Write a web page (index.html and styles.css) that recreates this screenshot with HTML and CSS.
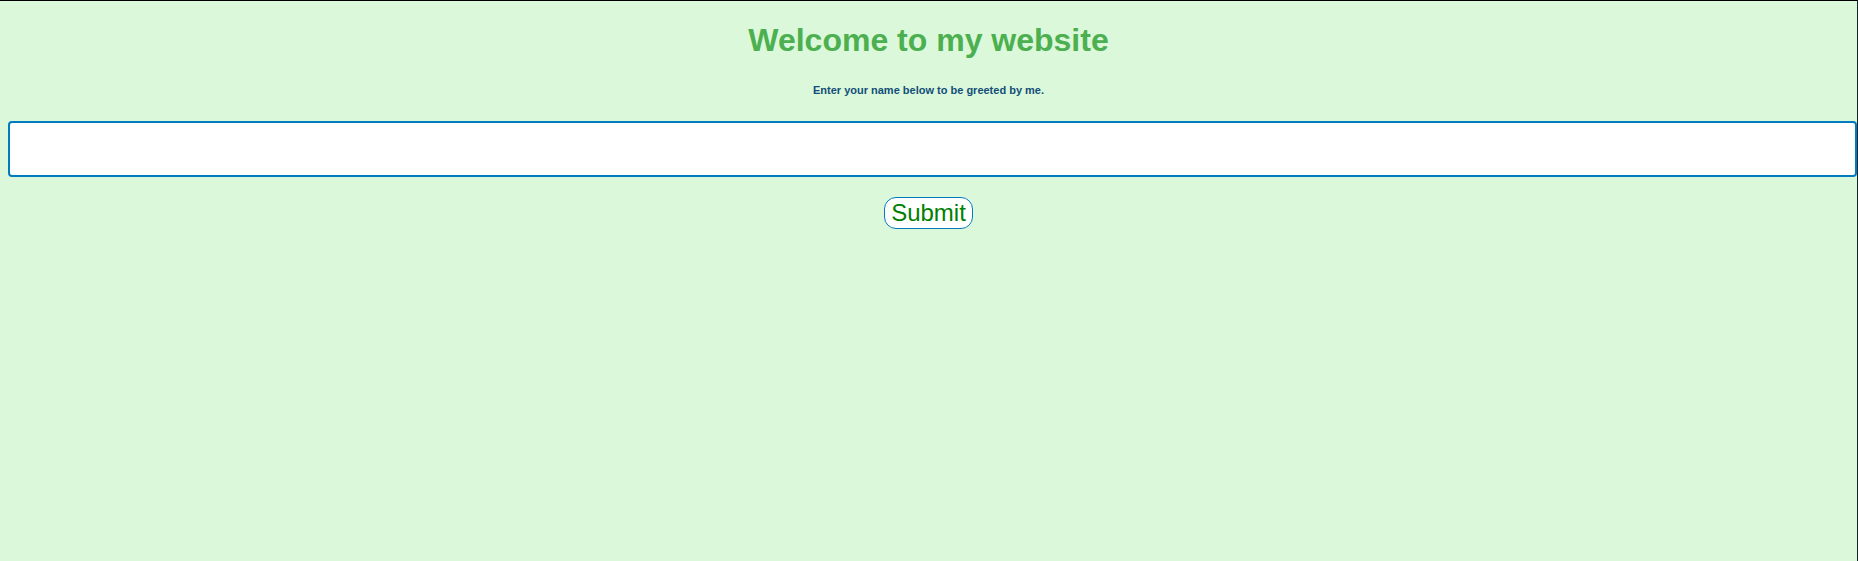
FILE: index.html
```html
<!DOCTYPE html>
<html lang="en">
<head>
<meta charset="utf-8">
<title>Welcome to my website</title>
<link rel="stylesheet" href="styles.css">
</head>
<body>
<main class="page">
<h1 class="title">Welcome to my website</h1>
<form class="greeting">
<label class="prompt" for="name">Enter your name below to be greeted by me.</label>
<input class="name" id="name" type="text">
<button class="submit" type="button">Submit</button>
</form>
</main>
</body>
</html>
```
FILE: styles.css
```css
* {
  box-sizing: border-box;
}

body {
  margin: 0;
  background: #dbf8da;
  font-family: Arial, "Liberation Sans", sans-serif;
}

.page {
  min-height: 100vh;
  padding: 21px 0 0 8px;
  border-top: 1px solid #000;
  border-right: 1px solid #14242b;
}

.title {
  margin: 0 8px 25px 0;
  color: #4caf50;
  font-size: 32px;
  line-height: 37px;
  text-align: center;
}

.greeting {
  display: flex;
  flex-direction: column;
  align-items: center;
}

.prompt {
  margin: 0 8px 24px 0;
  color: #124e78;
  font-size: 11px;
  font-weight: bold;
  line-height: 13px;
}

.name {
  width: 100%;
  height: 56px;
  padding: 12px 20px;
  border: 2px solid #007bbd;
  border-radius: 4px;
  background: #fff;
  outline: none;
}

.submit {
  margin: 20px 8px 0 0;
  padding: 1px 6px;
  border: 1px solid #007bbd;
  border-radius: 12px;
  background: #fff;
  color: #008000;
  font-family: inherit;
  font-size: 24px;
  line-height: 28px;
}
```
